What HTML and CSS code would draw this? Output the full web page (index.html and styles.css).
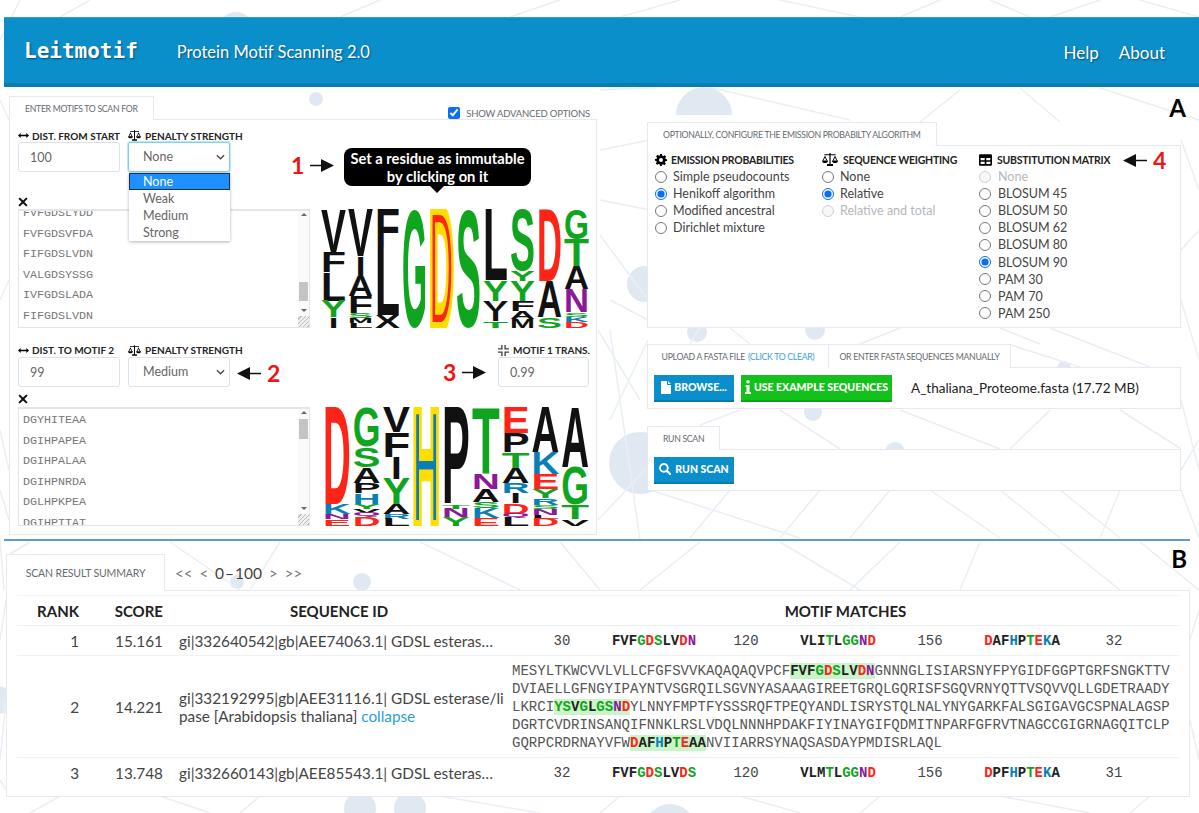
FILE: index.html
```html
<!DOCTYPE html>
<html lang="en">
<head>
    <meta charset="UTF-8">
    <meta name="viewport" content="width=device-width, initial-scale=1.0">
    <title>Leitmotif</title>
    <link rel="stylesheet" href="styles.css">
</head>
<body>
    <!-- Icons -->
    <svg class="icon-defs" width="0" height="0">
        <symbol id="i-width" viewBox="0 0 14 8"><path d="M0 4 3.400 .8V3h7.200V.8L14 4l-3.400 3.200V5H3.400v2.200z"/></symbol>
        <symbol id="i-scale" viewBox="0 0 16 13"><path d="M7.400 0h1.200v1.300h5v1h-5v8.700h2.400v2H5v-2h2.400V2.300h-5v-1h5z"/><path d="M3 2.500.6 7.500h1L3 4.600l1.400 2.900h1zM13 2.500l-2.400 5h1L13 4.600l1.400 2.900h1z"/><path d="M0 7.500h6C6 9.400 4.700 10 3 10S0 9.400 0 7.500zM10 7.500h6c0 1.900-1.300 2.500-3 2.500s-3-.6-3-2.500z"/></symbol>
        <symbol id="i-compress" viewBox="0 0 12 12"><path d="M3.500 0H5v5H0V3.500h3.500zM7 0h1.500v3.500H12V5H7zM0 7h5v5H3.500V8.500H0zM7 7h5v1.500H8.500V12H7z"/></symbol>
        <symbol id="i-times" viewBox="0 0 10 10"><path d="M1.800.4 5 3.600 8.200.4 9.600 1.800 6.400 5l3.200 3.200-1.400 1.400L5 6.400 1.800 9.600.4 8.200 3.600 5 .4 1.800z"/></symbol>
        <symbol id="i-cog" viewBox="0 0 24 24"><path d="M10 0h4l.7 3.300 2 .8L19.500 2.300l2.800 2.800-1.800 2.800.8 2L24 10.600v3.400l-3.300.7-.8 2 1.800 2.800-2.800 2.800-2.800-1.800-2 .8L13.400 24H10l-.7-3.300-2-.8-2.800 1.800-2.800-2.800 1.800-2.800-.8-2L0 13.400V10l3.300-.7.8-2L2.300 4.500l2.800-2.800 2.800 1.800 2-.8zM12 8a4 4 0 1 0 0 8 4 4 0 0 0 0-8z" fill-rule="evenodd"/></symbol>
        <symbol id="i-table" viewBox="0 0 16 14"><path fill-rule="evenodd" d="M1.500 0h13A1.500 1.500 0 0 1 16 1.500v11a1.500 1.500 0 0 1-1.500 1.500h-13A1.500 1.500 0 0 1 0 12.500v-11A1.500 1.500 0 0 1 1.500 0zM2 4.500v2.800h5V4.500zm7 0v2.800h5V4.500zm-7 4.600V12h5V9.100zm7 0V12h5V9.100z"/></symbol>
        <symbol id="i-file" viewBox="0 0 10 13"><path d="M0 .7C0 .3.300 0 .7 0H6v3.500c0 .3.200.5.500.5H10v8.300c0 .4-.3.7-.7.7H.7c-.4 0-.7-.3-.7-.7zM7 0l3 3H7z"/></symbol>
        <symbol id="i-info" viewBox="0 0 6 14"><circle cx="3" cy="1.800" r="1.800"/><path d="M.6 5h3.900v7H6v2H0v-2h1.500V7H.6z"/></symbol>
        <symbol id="i-search" viewBox="0 0 13 13"><circle cx="5.300" cy="5.300" r="4.200" fill="none" stroke="currentColor" stroke-width="2"/><path d="M8.500 8.500 12 12" stroke="currentColor" stroke-width="2.400" stroke-linecap="round"/></symbol>
        <symbol id="i-chevron" viewBox="0 0 10 6"><path d="M1 1l4 4 4-4" fill="none" stroke="currentColor" stroke-width="1.400"/></symbol>
        <symbol id="i-arrow-right" viewBox="0 0 24 13"><path d="M0 5.800h11V0l13 6.500L11 13V7.200H0z"/></symbol>
        <symbol id="i-arrow-left" viewBox="0 0 24 13"><path d="M24 5.800H13V0L0 6.500 13 13V7.200h11z"/></symbol>
    </svg>

    <!-- Faint network behind the page -->
    <svg class="network" viewBox="0 0 1199 813" width="1199" height="813">
        <g class="network-dots">
            <circle cx="236" cy="30" r="18"/><circle cx="316" cy="99" r="7"/><path d="M676 115A28 28 0 0 1 732 115z"/>
            <circle cx="645" cy="284" r="18"/><circle cx="640" cy="463" r="31"/><circle cx="815" cy="330" r="10"/>
            <circle cx="697" cy="332" r="10"/><circle cx="813" cy="412" r="9"/><circle cx="895" cy="452" r="10"/>
            <circle cx="1064" cy="368" r="7"/><circle cx="362" cy="582" r="9"/><circle cx="237" cy="582" r="7"/>
            <circle cx="360" cy="808" r="16"/><circle cx="410" cy="808" r="16"/><circle cx="670" cy="830" r="26"/>
            <circle cx="-2" cy="700" r="14"/>
        </g>
        <g class="network-lines">
            <path d="M20 0 0 40M90 0 60 17M380 0 340 17M560 0 510 17M680 0 620 17M780 0 860 17M940 0 900 17M990 0 1030 17M1100 0 1050 17M1140 0 1199 17"/>
            <path d="M600 90 700 85 850 120M600 150 650 140M600 200 650 210M600 235 648 300M610 300 648 320M960 90 920 122M1020 88 1060 122M1100 88 1199 120M1181 140 1199 190M1181 250 1199 230M1181 300 1199 360"/>
            <path d="M610 330 640 540M648 340 610 420M700 328 690 344M730 328 750 344M900 328 860 344M1000 328 1040 344M1050 328 1150 367M1011 345 1080 367"/>
            <path d="M740 410 700 425M780 410 840 449M900 410 1000 449M1050 410 1010 449M1120 410 1181 449M1181 400 1199 470M1181 470 1199 440"/>
            <path d="M650 490 800 538M730 490 690 538M820 490 780 538M890 490 850 538M930 490 1000 538M1000 490 1060 538M1060 490 1120 538M1120 490 1100 538M1181 490 1199 538"/>
            <path d="M598 330 640 400M598 520 645 470M600 60 640 20M0 100 9 120M0 300 9 280M0 430 9 470M0 490 9 520"/>
            <path d="M30 542 10 554M170 542 240 590M280 542 250 590M420 542 520 590M560 542 600 590M700 542 640 590M780 542 860 590M900 542 850 590M980 542 960 590M1060 542 1120 590M1140 542 1199 590M0 540 4 590"/>
            <path d="M0 640 6 600M0 760 6 700M0 780 6 790M1190 640 1199 610M1190 720 1199 760M60 796 30 813M160 796 210 813M260 796 240 813M440 796 540 813M620 796 600 813M740 796 800 813M880 796 860 813M1000 796 1090 813M1150 796 1130 813"/>
        </g>
    </svg>

    <header class="topbar">
        <div class="brand">
            <span class="brand-name">Leitmotif</span>
            <span class="brand-sub">Protein Motif Scanning 2.0</span>
        </div>
        <nav class="topbar-nav">
            <a href="#">Help</a>
            <a href="#">About</a>
        </nav>
    </header>

    <main class="workspace">
        <section class="col-left">
            <div class="tab-row">
                <div class="tab">Enter motifs to scan for</div>
                <label class="advanced"><input type="checkbox" checked>Show advanced options</label>
            </div>
            <div class="panel motif-panel">
                <div class="field-row">
                    <div class="field">
                        <label class="field-label"><svg class="ic ic-width"><use href="#i-width"/></svg>Dist. from start</label>
                        <input class="control" type="text" value="100">
                    </div>
                    <div class="field">
                        <label class="field-label"><svg class="ic ic-scale"><use href="#i-scale"/></svg>Penalty strength</label>
                        <div class="select focused">None<svg class="chevron"><use href="#i-chevron"/></svg></div>
                        <ul class="select-menu">
                            <li class="selected">None</li>
                            <li>Weak</li>
                            <li>Medium</li>
                            <li>Strong</li>
                        </ul>
                    </div>
                </div>
                <svg class="remove"><use href="#i-times"/></svg>
                <div class="motif-body">
                    <div class="seq-list seq-scrolled">
                        <div class="seq-lines">
                            <div>FVFGDSLYDD</div>
                            <div>FVFGDSVFDA</div>
                            <div>FIFGDSLVDN</div>
                            <div>VALGDSYSSG</div>
                            <div>IVFGDSLADA</div>
                            <div>FIFGDSLVDN</div>
                        </div>
                        <div class="scrollbar"><span class="thumb thumb-low"></span></div>
                        <span class="grip"></span>
                    </div>
                    <svg class="logo logo-one" width="270" height="119" data-logo="V128 F62 L86 Y50 I32|V141 I60 A62 F50 S15 M15 L15|F116 L204 X38|G358|D358*|S358|L214 Y62 V30 I32 T20|S186 Y30 Y60 F30 A24 M28|D216 A110 S32|G91 T80 A70 N70 S13 K17 D17"></svg>
                </div>

                <div class="field-row field-row-second">
                    <div class="field">
                        <label class="field-label"><svg class="ic ic-width"><use href="#i-width"/></svg>Dist. to motif 2</label>
                        <input class="control" type="text" value="99">
                    </div>
                    <div class="field">
                        <label class="field-label"><svg class="ic ic-scale"><use href="#i-scale"/></svg>Penalty strength</label>
                        <div class="select">Medium<svg class="chevron"><use href="#i-chevron"/></svg></div>
                    </div>
                    <div class="field field-trans">
                        <label class="field-label"><svg class="ic ic-compress"><use href="#i-compress"/></svg>Motif 1 trans.</label>
                        <input class="control" type="text" value="0.99">
                    </div>
                </div>
                <svg class="remove remove-second"><use href="#i-times"/></svg>
                <div class="motif-body">
                    <div class="seq-list seq-second">
                        <div class="seq-lines">
                            <div>DGYHITEAA</div>
                            <div>DGIHPAPEA</div>
                            <div>DGIHPALAA</div>
                            <div>DGIHPNRDA</div>
                            <div>DGLHPKPEA</div>
                            <div>DGIHPTTAT</div>
                        </div>
                        <div class="scrollbar"><span class="thumb thumb-high"></span></div>
                        <span class="grip"></span>
                    </div>
                    <svg class="logo logo-two" width="268" height="119" data-logo="D291 K30 N17 E20|G120 S61 A48 P30 H32 Y15 V13 Q12 D27|V76 F75 I65 Y75 A30 R15 L22|H358*|P294 T12 N25 Y27|T201 N45 A40 S18 K30 E24|E78 P58 T48 A45 R30 I30 D32 Q12 L25|A136 K65 E45 Y28 R20 S12 N18 L12 D22|A181 G113 T44 V20"></svg>
                </div>

                <!-- Figure call-outs -->
                <div class="callout callout-one">
                    <span class="callout-num">1</span>
                    <svg class="callout-arrow"><use href="#i-arrow-right"/></svg>
                </div>
                <div class="hint">Set a residue as immutable<br>by clicking on it</div>
                <div class="callout callout-two">
                    <svg class="callout-arrow"><use href="#i-arrow-left"/></svg>
                    <span class="callout-num">2</span>
                </div>
                <div class="callout callout-three">
                    <span class="callout-num">3</span>
                    <svg class="callout-arrow"><use href="#i-arrow-right"/></svg>
                </div>
            </div>
        </section>

        <section class="col-right">
            <span class="figure-letter figure-a">A</span>
            <div class="tab-row">
                <div class="tab">Optionally, configure the emission probabilty algorithm</div>
            </div>
            <div class="panel options-panel">
                <div class="option-col option-col-1">
                    <h3 class="option-head"><svg class="ic ic-cog"><use href="#i-cog"/></svg>Emission probabilities</h3>
                    <label class="radio"><input type="radio" name="emission">Simple pseudocounts</label>
                    <label class="radio"><input type="radio" name="emission" checked>Henikoff algorithm</label>
                    <label class="radio"><input type="radio" name="emission">Modified ancestral</label>
                    <label class="radio"><input type="radio" name="emission">Dirichlet mixture</label>
                </div>
                <div class="option-col option-col-2">
                    <h3 class="option-head"><svg class="ic ic-scale-lg"><use href="#i-scale"/></svg>Sequence weighting</h3>
                    <label class="radio"><input type="radio" name="weighting">None</label>
                    <label class="radio"><input type="radio" name="weighting" checked>Relative</label>
                    <label class="radio disabled"><input type="radio" name="weighting" disabled>Relative and total</label>
                </div>
                <div class="option-col option-col-3">
                    <h3 class="option-head"><svg class="ic ic-table"><use href="#i-table"/></svg>Substitution matrix</h3>
                    <label class="radio disabled"><input type="radio" name="matrix" disabled>None</label>
                    <label class="radio"><input type="radio" name="matrix">BLOSUM 45</label>
                    <label class="radio"><input type="radio" name="matrix">BLOSUM 50</label>
                    <label class="radio"><input type="radio" name="matrix">BLOSUM 62</label>
                    <label class="radio"><input type="radio" name="matrix">BLOSUM 80</label>
                    <label class="radio"><input type="radio" name="matrix" checked>BLOSUM 90</label>
                    <label class="radio"><input type="radio" name="matrix">PAM 30</label>
                    <label class="radio"><input type="radio" name="matrix">PAM 70</label>
                    <label class="radio"><input type="radio" name="matrix">PAM 250</label>
                </div>
                <div class="callout callout-four">
                    <svg class="callout-arrow"><use href="#i-arrow-left"/></svg>
                    <span class="callout-num">4</span>
                </div>
            </div>

            <div class="tab-row tab-row-upload">
                <div class="tab tab-upload">Upload a fasta file <a href="#">(click to clear)</a></div>
                <div class="tab tab-manual">Or enter fasta sequences manually</div>
            </div>
            <div class="panel action-panel">
                <button class="btn btn-blue btn-browse"><svg class="ic ic-file"><use href="#i-file"/></svg>Browse...</button>
                <button class="btn btn-green"><svg class="ic ic-info"><use href="#i-info"/></svg>Use example sequences</button>
                <span class="file-name">A_thaliana_Proteome.fasta (17.72 MB)</span>
            </div>

            <div class="tab-row tab-row-run">
                <div class="tab">Run scan</div>
            </div>
            <div class="panel action-panel">
                <button class="btn btn-blue btn-run"><svg class="ic ic-search"><use href="#i-search"/></svg>Run scan</button>
            </div>
        </section>
    </main>

    <hr class="divider">

    <section class="results">
        <span class="figure-letter figure-b">B</span>
        <div class="tab-row results-tabs">
            <div class="tab tab-results">Scan result summary</div>
            <div class="pager"><span>&lt;&lt;</span><span>&lt;</span><strong>0&#8202;&#8211;&#8202;100</strong><span>&gt;</span><span>&gt;&gt;</span></div>
        </div>
        <div class="panel results-panel">
            <table class="results-table">
                <thead>
                    <tr>
                        <th class="c-rank">Rank</th>
                        <th class="c-score">Score</th>
                        <th class="c-id">Sequence ID</th>
                        <th class="c-motif">Motif matches</th>
                    </tr>
                </thead>
                <tbody>
                    <tr>
                        <td class="c-rank">1</td>
                        <td class="c-score">15.161</td>
                        <td class="c-id">gi|332640542|gb|AEE74063.1| GDSL esteras&#8230;</td>
                        <td class="c-motif">
                            <div class="motif-grid"><span>30</span><b data-residues>FVFGDSLVDN</b><span>120</span><b data-residues>VLITLGGND</b><span>156</span><b data-residues>DAFHPTEKA</b><span>32</span></div>
                        </td>
                    </tr>
                    <tr>
                        <td class="c-rank">2</td>
                        <td class="c-score">14.221</td>
                        <td class="c-id c-id-open">gi|332192995|gb|AEE31116.1| GDSL esterase/lipase [Arabidopsis thaliana] <a href="#">collapse</a></td>
                        <td class="c-motif">
                            <div class="full-seq">MESYLTKWCVVLVLLCFGFSVVKAQAQAQVPCF<mark data-residues>FVFGDSLVDN</mark>GNNNGLISIARSNYFPYGIDFGGPTGRFSNGKTTV
DVIAELLGFNGYIPAYNTVSGRQILSGVNYASAAAGIREETGRQLGQRISFSGQVRNYQTTVSQVVQLLGDETRAADY
LKRCI<mark data-residues>YSVGLGSND</mark>YLNNYFMPTFYSSSRQFTPEQYANDLISRYSTQLNALYNYGARKFALSGIGAVGCSPNALAGSP
DGRTCVDRINSANQIFNNKLRSLVDQLNNNHPDAKFIYINAYGIFQDMITNPARFGFRVTNAGCCGIGRNAGQITCLP
GQRPCRDRNAYVFW<mark data-residues>DAFHPTEAA</mark>NVIIARRSYNAQSASDAYPMDISRLAQL</div>
                        </td>
                    </tr>
                    <tr>
                        <td class="c-rank">3</td>
                        <td class="c-score">13.748</td>
                        <td class="c-id">gi|332660143|gb|AEE85543.1| GDSL esteras&#8230;</td>
                        <td class="c-motif">
                            <div class="motif-grid"><span>32</span><b data-residues>FVFGDSLVDS</b><span>120</span><b data-residues>VLMTLGGND</b><span>156</span><b data-residues>DPFHPTEKA</b><span>31</span></div>
                        </td>
                    </tr>
                </tbody>
            </table>
        </div>
    </section>

    <script src="logos.js"></script>
</body>
</html>
```

FILE: styles.css
```css
:root {
    --text-color: #333333;
    --muted: #666b70;
    --border: #e6e9ee;
    --blue: #0b8fcb;
    --blue-dark: #0a7cb4;
    --green: #12c21a;
    --ui-font: "Lato", "Noto Sans", sans-serif;
    --mono-font: "Liberation Mono", "DejaVu Sans Mono", monospace;
}

html, body {
    margin: 0;
    padding: 0;
}

body {
    position: relative;
    width: 1199px;
    height: 813px;
    overflow: hidden;
    padding-top: 17px;
    box-sizing: border-box;
    background: #ffffff;
    color: var(--text-color);
    font-family: var(--ui-font);
    font-size: 13px;
}

.icon-defs {
    position: absolute;
}

.network {
    position: absolute;
    top: 0;
    left: 0;
    z-index: -1;
}

.network-dots {
    fill: #e0e9f2;
}

.network-lines {
    fill: none;
    stroke: #e9eff5;
    stroke-width: 1.500;
}

/* Top bar */
.topbar {
    margin-left: 4px;
    height: 70px;
    box-sizing: border-box;
    padding: 0 34px 0 20px;
    display: flex;
    align-items: center;
    justify-content: space-between;
    background: var(--blue);
    border-top: 1px solid #2a9fd6;
    border-bottom: 4px solid var(--blue-dark);
    color: #ffffff;
    text-shadow: 1px 1px 2px rgba(0, 0, 0, 0.45);
}

.brand {
    display: flex;
    align-items: baseline;
    gap: 39px;
}

.brand-name {
    font-family: "DejaVu Sans Mono", monospace;
    font-weight: bold;
    font-size: 21px;
}

.brand-sub {
    font-size: 16.500px;
}

.topbar-nav {
    display: flex;
    gap: 20px;
    padding-top: 4px;
}

.topbar-nav a {
    color: #ffffff;
    text-decoration: none;
    font-size: 17px;
}

/* Columns */
.workspace {
    display: flex;
    align-items: flex-start;
    gap: 50px;
    padding: 9px 0 0 9px;
}

.col-left {
    width: 588px;
}

.col-right {
    position: relative;
    width: 534px;
    padding-top: 26px;
}

/* Tabs and panels */
.tab-row {
    display: flex;
    align-items: flex-end;
    justify-content: space-between;
    height: 23px;
}

.tab {
    height: 24px;
    box-sizing: border-box;
    padding: 0 15px;
    margin-bottom: -1px;
    display: flex;
    align-items: center;
    gap: 3px;
    background: #ffffff;
    border: 1px solid var(--border);
    border-bottom: none;
    position: relative;
    z-index: 1;
    font-size: 8.700px;
    letter-spacing: -0.300px;
    text-transform: uppercase;
    color: var(--muted);
    white-space: nowrap;
}

.tab a {
    color: #3a9fd8;
    text-decoration: none;
}

.panel {
    position: relative;
    background: #ffffff;
    border: 1px solid var(--border);
    box-sizing: border-box;
}

.advanced {
    display: flex;
    align-items: center;
    gap: 6px;
    padding-right: 7px;
    font-size: 9.500px;
    letter-spacing: -0.200px;
    text-transform: uppercase;
    color: var(--muted);
}

.advanced input {
    margin: 0;
    width: 12px;
    height: 12px;
    accent-color: #0a6ef5;
}

/* Motif entry */
.motif-panel {
    height: 416px;
    padding: 9px 6px 0 8px;
}

.field-row {
    display: flex;
    gap: 8px;
}

.field-row-second {
    margin-top: 15px;
}

.field-row-second .field-label {
    height: 14px;
}

.field {
    position: relative;
    width: 102px;
}

.field-trans {
    width: 91px;
    margin-left: auto;
    margin-right: 1px;
}

.field-label {
    display: flex;
    align-items: center;
    gap: 3px;
    height: 13px;
    white-space: nowrap;
    font-size: 10px;
    font-weight: 700;
    text-transform: uppercase;
    color: #222222;
}

.control,
.select {
    display: block;
    width: 100%;
    height: 30px;
    margin-top: 0;
    padding: 0 11px;
    box-sizing: border-box;
    border: 1px solid #dde2e8;
    border-radius: 3px;
    background: #ffffff;
    color: #666666;
    font-family: var(--ui-font);
    font-size: 12.500px;
    line-height: 28px;
}

.select {
    position: relative;
    padding-left: 14px;
}

.select.focused {
    border-color: #80d0f0;
    box-shadow: 0 0 0 1px #bce6f8;
}

.chevron {
    position: absolute;
    top: 11px;
    right: 4px;
    width: 9px;
    height: 6px;
    color: #444444;
}

.select-menu {
    position: absolute;
    top: 44px;
    left: 1px;
    z-index: 3;
    width: 101px;
    margin: 0;
    padding: 0;
    list-style: none;
    background: #ffffff;
    box-shadow: 0 1px 3px rgba(0, 0, 0, 0.3);
    color: #666666;
    font-size: 12.500px;
}

.select-menu li {
    height: 17px;
    line-height: 18px;
    padding-left: 14px;
}

.select-menu li.selected {
    background: #1e90ff;
    color: #ffffff;
    outline: 1px solid #20304a;
    outline-offset: -1px;
}

.remove {
    display: block;
    width: 10px;
    height: 10px;
    margin: 25px 0 2px 0;
    fill: #111111;
}

.remove-second {
    margin: 7px 0 3px 0;
}

.motif-body {
    display: flex;
    gap: 10px;
}

.seq-list {
    position: relative;
    width: 292px;
    height: 119px;
    flex: none;
    box-sizing: border-box;
    overflow: hidden;
    border: 1px solid #e2e5ea;
    border-top-width: 2px;
    background: #ffffff;
}

.seq-lines {
    padding: 0 0 0 4px;
    font-family: var(--mono-font);
    font-size: 11.700px;
    line-height: 20.500px;
    color: #777777;
}

.seq-scrolled .seq-lines {
    margin-top: -8px;
}

.seq-second .seq-lines {
    padding-top: 1px;
}

.scrollbar {
    position: absolute;
    top: 0;
    right: 0;
    bottom: 0;
    width: 11px;
    background: #fafafa;
}

.scrollbar::before,
.scrollbar::after {
    content: "";
    position: absolute;
    left: 3px;
    border: 3px solid transparent;
}

.scrollbar::before {
    top: 2px;
    border-top-width: 0;
    border-bottom-color: #666666;
}

.scrollbar::after {
    bottom: 15px;
    border-bottom-width: 0;
    border-top-color: #666666;
}

.thumb {
    position: absolute;
    left: 1px;
    right: 1px;
    background: #c4c4c4;
}

.thumb-low {
    top: 71px;
    height: 19px;
}

.thumb-high {
    top: 10px;
    height: 20px;
}

.grip {
    position: absolute;
    right: 0;
    bottom: 0;
    width: 11px;
    height: 11px;
    background: repeating-linear-gradient(135deg, #f0f0f0 0 2px, #bbbbbb 2px 3px);
}

.logo {
    flex: none;
}

.logo-two {
    margin-left: 2px;
}

.logo text {
    font-family: "Liberation Sans", sans-serif;
    font-size: 100px;
    font-weight: bold;
}

/* Figure call-outs */
.callout {
    position: absolute;
    display: flex;
    align-items: center;
    gap: 6px;
    z-index: 2;
}

.callout-num {
    color: #f01414;
    font-size: 23px;
    font-weight: 700;
    line-height: 24px;
}

.callout-arrow {
    width: 24px;
    height: 13px;
    fill: #111111;
}

.callout-one {
    top: 33px;
    left: 281px;
}

.callout-two {
    top: 241px;
    left: 227px;
}

.callout-three {
    top: 240px;
    left: 433px;
}

.callout-four {
    top: 2px;
    left: 475px;
}

.hint {
    position: absolute;
    top: 28px;
    left: 334px;
    z-index: 2;
    width: 187px;
    height: 38px;
    padding-top: 1px;
    box-sizing: border-box;
    border-radius: 8px;
    background: #000000;
    color: #ffffff;
    font-size: 14.700px;
    font-weight: 700;
    line-height: 18px;
    text-align: center;
    white-space: nowrap;
}

.hint::after {
    content: "";
    position: absolute;
    left: 86px;
    top: 38px;
    border: 7px solid transparent;
    border-top-color: #000000;
    border-bottom-width: 0;
}

.figure-letter {
    position: absolute;
    color: #000000;
    font-size: 24px;
    font-weight: 700;
}

.figure-a {
    top: -3px;
    right: -5px;
}

/* Emission options */
.options-panel {
    height: 183px;
    padding: 5px 0 0 7px;
    display: grid;
    grid-template-columns: 167px 157px 1fr;
}

.option-head {
    display: flex;
    align-items: center;
    gap: 4px;
    margin: 0;
    height: 17px;
    white-space: nowrap;
    font-size: 10.500px;
    font-weight: 700;
    letter-spacing: -0.250px;
    text-transform: uppercase;
    color: #222222;
}

.radio {
    display: flex;
    align-items: center;
    gap: 6px;
    height: 17.100px;
    white-space: nowrap;
    font-size: 12.500px;
    color: #444444;
}

.radio input {
    width: 12px;
    height: 12px;
    margin: 0;
    accent-color: #0a6ef5;
}

.radio.disabled {
    color: #b4b8bc;
}

.option-col-3 .radio {
    gap: 7px;
}

/* Upload and run */
.tab-row-upload {
    margin-top: 16px;
    justify-content: flex-start;
}

.tab-row-run {
    margin-top: 16px;
    height: 24px;
}

.tab-upload {
    width: 182px;
    justify-content: center;
    padding: 0;
}

.tab-manual {
    width: 183px;
    justify-content: center;
    padding: 0;
    margin-left: -1px;
}

.action-panel {
    height: 42px;
    display: flex;
    align-items: center;
    gap: 7px;
    padding: 0 0 0 6px;
}

.btn {
    height: 27px;
    display: flex;
    align-items: center;
    justify-content: center;
    gap: 3px;
    padding: 0;
    border: none;
    border-bottom: 2px solid rgba(0, 0, 0, 0.14);
    color: #ffffff;
    font-family: var(--ui-font);
    font-size: 10.500px;
    font-weight: 900;
    text-transform: uppercase;
    fill: #ffffff;
}

.btn-blue {
    width: 80px;
    background: #0b8fcb;
}

.btn-green {
    width: 151px;
    background: var(--green);
}

.file-name {
    margin: 0 0 1px 12px;
    font-size: 13.500px;
    color: #222222;
}

/* Divider and results */
.divider {
    height: 2px;
    margin: 4px 9px 0 4px;
    border: none;
    background: #5b9bd8;
}

.results {
    position: relative;
    margin: 13px 9px 0 6px;
}

.results-tabs {
    height: 36px;
    justify-content: flex-start;
}

.tab-results {
    height: 37px;
    width: 159px;
    justify-content: center;
    padding: 0;
    font-size: 10.500px;
    letter-spacing: -0.150px;
}

.pager {
    display: flex;
    align-items: center;
    gap: 7px;
    height: 34px;
    margin-left: 10px;
    color: #777777;
    font-size: 15px;
}

.pager strong {
    color: #444444;
    font-size: 15.500px;
    font-weight: 400;
}

.figure-b {
    top: -10px;
    right: 3px;
}

.results-panel {
    height: 207px;
    padding: 4px 10px 0;
}

.results-table {
    width: 100%;
    border-collapse: collapse;
    table-layout: fixed;
}

.results-table th {
    height: 29px;
    padding: 0;
    border-top: 1px solid #f2f3f5;
    border-bottom: 1px solid #f0f1f3;
    color: #222222;
    font-size: 15px;
    font-weight: 700;
}

.results-table td {
    height: 29px;
    padding: 0;
    border-bottom: 1px solid #f0f1f3;
    font-size: 15.300px;
    color: #444444;
}

.results-table tr:last-child td {
    border-bottom: none;
}

.c-rank {
    width: 68px;
    box-sizing: border-box;
    padding-right: 6px !important;
    text-align: right;
    text-transform: uppercase;
}

.c-score {
    width: 85px;
    box-sizing: border-box;
    padding-right: 7px !important;
    text-align: right;
    text-transform: uppercase;
}

.c-id {
    width: 335px;
    box-sizing: border-box;
    padding: 0 6px 0 9px !important;
    white-space: nowrap;
    text-transform: uppercase;
}

td.c-id {
    text-transform: none;
}

th.c-motif {
    text-transform: uppercase;
}

.c-id-open {
    padding-right: 0 !important;
    white-space: normal;
    word-break: break-all;
    line-height: 18px;
}

.c-id a {
    color: #2a9fd6;
    text-decoration: none;
}

.c-motif {
    padding-left: 7px !important;
}

.motif-grid {
    display: grid;
    grid-template-columns: repeat(7, 92px);
    justify-items: center;
    margin-left: 4px;
    font-family: var(--mono-font);
    font-size: 14px;
}

.motif-grid b {
    color: #222222;
}

.full-seq {
    padding: 6px 0 5px;
    white-space: pre;
    font-family: var(--mono-font);
    font-size: 14.060px;
    line-height: 18px;
    color: #555555;
}

.full-seq mark {
    background: #c9f5c9;
    color: #222222;
    font-weight: bold;
}

/* Residue colours, same scheme as the logos */
.res-green { color: #10a51e; }
.res-red { color: #ff2418; }
.res-blue { color: #0a7fb5; }
.res-purple { color: #8a1a9a; }

/* Icon sizes */
.ic {
    flex: none;
}

.ic-width {
    width: 11px;
    height: 7px;
    margin-right: 0;
}

.ic-scale {
    width: 13px;
    height: 11px;
    margin-right: 1px;
}

.ic-scale-lg {
    width: 16px;
    height: 13px;
    margin-right: 1px;
}

.ic-compress {
    width: 11px;
    height: 11px;
    margin-right: 1px;
    fill: #444444;
}

.ic-cog {
    width: 12px;
    height: 12px;
}

.ic-table {
    width: 13px;
    height: 12px;
    margin-right: 1px;
}

.ic-file {
    width: 10px;
    height: 13px;
    fill: #ffffff;
}

.ic-info {
    width: 6px;
    height: 14px;
    fill: #ffffff;
}

.ic-search {
    width: 12px;
    height: 12px;
    margin-right: 1px;
    color: #ffffff;
}
```

FILE: logos.js
```js
// Residue colours shared by the sequence logos and the motif strings
const residueColors = {
    G: 'green', S: 'green', T: 'green', Y: 'green',
    D: 'red', E: 'red',
    H: 'blue', K: 'blue', R: 'blue',
    N: 'purple', Q: 'purple'
};

const fillColors = { green: '#10a51e', red: '#ff2418', blue: '#0a7fb5', purple: '#8a1a9a' };

const ruler = document.createElement('canvas').getContext('2d');
ruler.font = 'bold 100px "Liberation Sans"';

// Stack one column of stretched letters. Heights are relative to the column total.
function drawColumn(svg, column, x, width, height) {
    const stack = column.split(' ').map(item => ({
        letter: item[0],
        size: parseFloat(item.slice(1)),
        fixed: item.endsWith('*')
    }));
    const total = stack.reduce((sum, item) => sum + item.size, 0);
    let y = 0;

    stack.forEach(item => {
        const h = item.size / total * height;
        const m = ruler.measureText(item.letter);
        const inkHeight = m.actualBoundingBoxAscent + m.actualBoundingBoxDescent;
        const inner = width - 2;
        // I keeps its narrow stem instead of filling the column
        const sx = item.letter === 'I' ? inner / 72 : inner / m.width;
        const left = x + (width - m.width * sx) / 2;
        const sy = h / inkHeight;
        const text = document.createElementNS('http://www.w3.org/2000/svg', 'text');

        text.textContent = item.letter;
        text.setAttribute('fill', fillColors[residueColors[item.letter]] || '#111111');
        text.setAttribute('transform', `translate(${left} ${y + m.actualBoundingBoxAscent * sy}) scale(${sx} ${sy})`);
        if (item.fixed) {
            text.setAttribute('stroke', '#ffdd00');
            text.setAttribute('stroke-width', '7');
        }
        svg.appendChild(text);
        y += h;
    });
}

document.querySelectorAll('.logo').forEach(svg => {
    const columns = svg.dataset.logo.split('|');
    const width = parseFloat(svg.getAttribute('width')) / columns.length;
    const height = parseFloat(svg.getAttribute('height'));
    columns.forEach((column, i) => drawColumn(svg, column, i * width, width, height));
});

// Colour the residues inside each motif string
document.querySelectorAll('[data-residues]').forEach(el => {
    el.innerHTML = el.textContent.split('').map(letter => {
        const color = residueColors[letter];
        return color ? `<span class="res-${color}">${letter}</span>` : letter;
    }).join('');
});
```
